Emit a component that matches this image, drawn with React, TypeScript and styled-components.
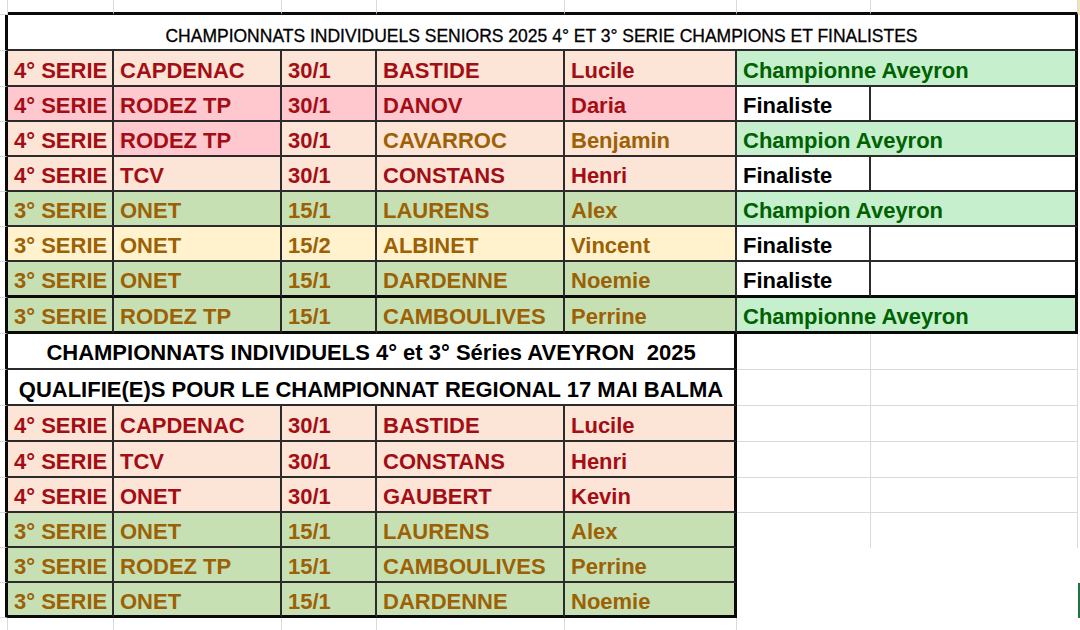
import styled, { createGlobalStyle } from "styled-components";
import { Fragment } from "react";

const GlobalStyle = createGlobalStyle`
  html, body {
    margin: 0;
    padding: 0;
    background: #ffffff;
  }
  body {
    font-family: "Liberation Sans", Arial, sans-serif;
    overflow: hidden;
  }
`;

type Line = "none" | "grid" | "thin" | "thick";

const lines: Record<Line, string> = {
    none: "0 solid transparent",
    grid: "1px solid #dadada",
    thin: "2px solid #2b2b2b",
    thick: "3px solid #0a0a0a",
};

type Tone = "salmon" | "pink" | "salmonBrown" | "green" | "cream" | "good" | "plain";

const tones: Record<Tone, { bg: string; fg: string }> = {
    salmon: { bg: "#fce4d6", fg: "#a30d15" },
    pink: { bg: "#ffc7ce", fg: "#a30d15" },
    salmonBrown: { bg: "#fce4d6", fg: "#9c6005" },
    green: { bg: "#c6e0b4", fg: "#9c6005" },
    cream: { bg: "#fff2cc", fg: "#9c6005" },
    good: { bg: "#c6efce", fg: "#006100" },
    plain: { bg: "#ffffff", fg: "#000000" },
};

const Sheet = styled.div`
    display: grid;
    grid-template-columns: 8px 106px 168px 95px 188px 172px 134px 207px 2px;
    grid-template-rows:
        15px 36px 36px 35px 35px 35px 35px 35px 36px 36px
        36px 36px 36px 36px 35px 35px 35px 35px 12px;
    width: 1080px;
    height: 630px;
`;

const Cell = styled.div<{ $right?: Line; $bottom?: Line; $span?: number; $bg?: string }>`
    box-sizing: border-box;
    grid-column: span ${(p) => p.$span ?? 1};
    min-width: 0;
    overflow: hidden;
    background: ${(p) => p.$bg ?? "transparent"};
    border-right: ${(p) => lines[p.$right ?? "none"]};
    border-bottom: ${(p) => lines[p.$bottom ?? "none"]};
`;

const DataCell = styled(Cell)<{ $fg: string }>`
    display: flex;
    align-items: center;
    padding: 5px 0 0 6px;
    font-size: 22px;
    font-weight: 700;
    color: ${(p) => p.$fg};
    white-space: nowrap;
`;

const TitleCell = styled(Cell)<{ $size: number; $weight: number; $shift: number }>`
    display: flex;
    align-items: center;
    justify-content: center;
    padding-top: ${(p) => p.$shift}px;
    font-size: ${(p) => p.$size}px;
    font-weight: ${(p) => p.$weight};
    color: #000000;
    -webkit-text-stroke: ${(p) => (p.$weight < 700 ? "0.3px #000" : "0")};
    white-space: pre;
`;

type Entry = [Tone, string];

interface ResultRow {
    cells: Entry[];
    result: "Championne Aveyron" | "Champion Aveyron" | "Finaliste";
    bottom: Line;
}

const mix = (tone: Tone, values: string[]): Entry[] => values.map((v) => [tone, v]);

const seniors: ResultRow[] = [
    { cells: mix("salmon", ["4° SERIE", "CAPDENAC", "30/1", "BASTIDE", "Lucile"]), result: "Championne Aveyron", bottom: "thin" },
    { cells: mix("pink", ["4° SERIE", "RODEZ TP", "30/1", "DANOV", "Daria"]), result: "Finaliste", bottom: "thin" },
    {
        cells: [
            ["salmon", "4° SERIE"],
            ["pink", "RODEZ TP"],
            ["salmon", "30/1"],
            ["salmonBrown", "CAVARROC"],
            ["salmonBrown", "Benjamin"],
        ],
        result: "Champion Aveyron",
        bottom: "thin",
    },
    { cells: mix("salmon", ["4° SERIE", "TCV", "30/1", "CONSTANS", "Henri"]), result: "Finaliste", bottom: "thin" },
    { cells: mix("green", ["3° SERIE", "ONET", "15/1", "LAURENS", "Alex"]), result: "Champion Aveyron", bottom: "thin" },
    { cells: mix("cream", ["3° SERIE", "ONET", "15/2", "ALBINET", "Vincent"]), result: "Finaliste", bottom: "thin" },
    { cells: mix("green", ["3° SERIE", "ONET", "15/1", "DARDENNE", "Noemie"]), result: "Finaliste", bottom: "thick" },
    { cells: mix("green", ["3° SERIE", "RODEZ TP", "15/1", "CAMBOULIVES", "Perrine"]), result: "Championne Aveyron", bottom: "thick" },
];

const qualified: Entry[][] = [
    mix("salmon", ["4° SERIE", "CAPDENAC", "30/1", "BASTIDE", "Lucile"]),
    mix("salmon", ["4° SERIE", "TCV", "30/1", "CONSTANS", "Henri"]),
    mix("salmon", ["4° SERIE", "ONET", "30/1", "GAUBERT", "Kevin"]),
    mix("green", ["3° SERIE", "ONET", "15/1", "LAURENS", "Alex"]),
    mix("green", ["3° SERIE", "RODEZ TP", "15/1", "CAMBOULIVES", "Perrine"]),
    mix("green", ["3° SERIE", "ONET", "15/1", "DARDENNE", "Noemie"]),
];

function Entries({ cells, bottom, lastRight }: { cells: Entry[]; bottom: Line; lastRight: Line }) {
    return (
        <>
            {cells.map(([tone, text], i) => (
                <DataCell
                    key={i}
                    $bg={tones[tone].bg}
                    $fg={tones[tone].fg}
                    $right={i === cells.length - 1 ? lastRight : "thin"}
                    $bottom={bottom}
                >
                    {text}
                </DataCell>
            ))}
        </>
    );
}

function SeniorRow({ row }: { row: ResultRow }) {
    const champion = row.result !== "Finaliste";
    return (
        <>
            <Cell $right="thick" $bottom="grid" />
            <Entries cells={row.cells} bottom={row.bottom} lastRight="thin" />
            {champion ? (
                <DataCell $span={2} $bg={tones.good.bg} $fg={tones.good.fg} $right="thick" $bottom={row.bottom}>
                    {row.result}
                </DataCell>
            ) : (
                <>
                    <DataCell $bg="#ffffff" $fg="#000000" $right="thin" $bottom={row.bottom}>
                        {row.result}
                    </DataCell>
                    <Cell $bg="#ffffff" $right="thick" $bottom={row.bottom} />
                </>
            )}
            <Cell />
        </>
    );
}

export default function App() {
    return (
        <>
            <GlobalStyle />
            <Sheet>
                {/* header strip above the tables */}
                <Cell $right="grid" $bottom="grid" />
                {[0, 1, 2, 3, 4, 5, 6].map((i) => (
                    <Cell key={i} $right="grid" $bottom="thick" />
                ))}
                <Cell $bg="#efe6b0" />

                <Cell $right="thick" $bottom="grid" />
                <TitleCell $span={7} $size={17.5} $weight={400} $shift={8} $right="thick" $bottom="thin">
                    CHAMPIONNATS INDIVIDUELS SENIORS 2025 4° ET 3° SERIE CHAMPIONS ET FINALISTES
                </TitleCell>
                <Cell />

                {seniors.map((row, i) => (
                    <SeniorRow key={i} row={row} />
                ))}

                <Cell $right="thick" $bottom="grid" />
                <TitleCell $span={5} $size={22} $weight={700} $shift={3} $right="thick" $bottom="thin">
                    {"CHAMPIONNATS INDIVIDUELS 4° et 3° Séries AVEYRON  2025"}
                </TitleCell>
                <Cell $right="grid" $bottom="grid" />
                <Cell $right="grid" $bottom="grid" />
                <Cell />

                <Cell $right="thick" $bottom="grid" />
                <TitleCell $span={5} $size={22} $weight={700} $shift={5} $right="thick" $bottom="thin">
                    QUALIFIE(E)S POUR LE CHAMPIONNAT REGIONAL 17 MAI BALMA
                </TitleCell>
                <Cell $right="grid" $bottom="grid" />
                <Cell $right="grid" $bottom="grid" />
                <Cell />

                {qualified.map((cells, i) => {
                    const last = i === qualified.length - 1;
                    const gridded = i < 4;
                    return (
                        <Fragment key={i}>
                            <Cell $right="thick" $bottom="grid" />
                            <Entries cells={cells} bottom={last ? "thick" : "thin"} lastRight="thick" />
                            <Cell $right={gridded ? "grid" : "none"} $bottom={i < 3 ? "grid" : "none"} />
                            <Cell $right={gridded ? "grid" : "none"} $bottom={i < 3 ? "grid" : "none"} />
                            <Cell $bg={i === 5 ? "#217346" : undefined} />
                        </Fragment>
                    );
                })}

                {/* strip below the tables */}
                {[0, 1, 2, 3, 4, 5].map((i) => (
                    <Cell key={i} $right="grid" />
                ))}
                <Cell />
                <Cell />
                <Cell />
            </Sheet>
        </>
    );
}
